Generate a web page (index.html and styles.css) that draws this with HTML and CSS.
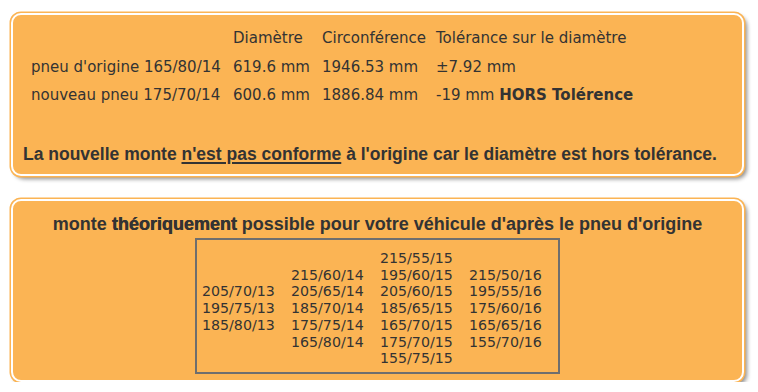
FILE: index.html
```html
<!DOCTYPE html>
<html lang="fr">
<head>
<meta charset="utf-8">
<title>Comparateur de pneus</title>
<link rel="stylesheet" href="styles.css">
</head>
<body>
<div class="page">
  <section class="panel panel-result">
    <table class="specs">
      <tr class="head">
        <th class="c1"></th>
        <th class="c2">Diamètre</th>
        <th class="c3">Circonférence</th>
        <th class="c4">Tolérance sur le diamètre</th>
      </tr>
      <tr>
        <td>pneu d'origine 165/80/14</td>
        <td>619.6 mm</td>
        <td>1946.53 mm</td>
        <td>±7.92 mm</td>
      </tr>
      <tr>
        <td>nouveau pneu 175/70/14</td>
        <td>600.6 mm</td>
        <td>1886.84 mm</td>
        <td>-19 mm <strong>HORS Tolérence</strong></td>
      </tr>
    </table>
    <p class="verdict">La nouvelle monte <u>n'est pas conforme</u> à l'origine car le diamètre est hors tolérance.</p>
  </section>
  <section class="panel panel-list">
    <h2 class="title">monte <strong>théoriquement</strong> possible pour votre véhicule d'après le pneu d'origine</h2>
    <div class="sizes">
      <div class="col">205/70/13<br>195/75/13<br>185/80/13</div>
      <div class="col">215/60/14<br>205/65/14<br>185/70/14<br>175/75/14<br>165/80/14</div>
      <div class="col">215/55/15<br>195/60/15<br>205/60/15<br>185/65/15<br>165/70/15<br>175/70/15<br>155/75/15</div>
      <div class="col">215/50/16<br>195/55/16<br>175/60/16<br>165/65/16<br>155/70/16</div>
    </div>
  </section>
</div>
</body>
</html>
```
FILE: styles.css
```css
* { box-sizing: border-box; }
body {
  margin: 0;
  background: #fff;
  color: #333;
  font-family: "DejaVu Sans", Verdana, sans-serif;
}
.page {
  padding: 13px 14px 0 11px;
  display: flex;
  flex-direction: column;
  gap: 23px;
}
.panel {
  background: #fbb454;
  border: 2px solid #fff;
  border-radius: 10px;
  box-shadow: 0 0 0 1.5px #fbb454, 3px 3px 4px rgba(0, 0, 0, 0.45);
}
.specs {
  border-collapse: collapse;
  margin: 7px 0 0 13px;
  font-size: 15px;
}
.specs th, .specs td {
  padding: 0 5px;
  height: 28px;
  text-align: left;
  font-weight: normal;
  white-space: nowrap;
}
.specs .head th { height: 31px; }
.specs .c1 { width: 202px; }
.specs .c2 { width: 89px; }
.specs .c3 { width: 113px; }
.specs strong { font-weight: bold; }
.verdict {
  margin: 36px 0 10px 10px;
  font-family: "Liberation Sans", Arial, sans-serif;
  font-weight: bold;
  font-size: 17.5px;
  line-height: 19px;
}
.verdict u { text-decoration-thickness: 1.5px; text-underline-offset: 2px; }
.title {
  margin: 14px 0 4px;
  text-align: center;
  font-family: "Liberation Sans", Arial, sans-serif;
  font-size: 18px;
  line-height: 19px;
  font-weight: bold;
}
.title strong { text-shadow: 0.6px 0 0 #333; }
.sizes {
  width: fit-content;
  margin: 0 auto 6px;
  border: 2px solid #6e6e6e;
  padding: 10px 5px 5px 0;
  display: grid;
  grid-template-columns: repeat(4, 89px);
  align-items: center;
  font-size: 14.2px;
  line-height: 16.7px;
}
.col { padding-left: 5px; white-space: nowrap; }
```
